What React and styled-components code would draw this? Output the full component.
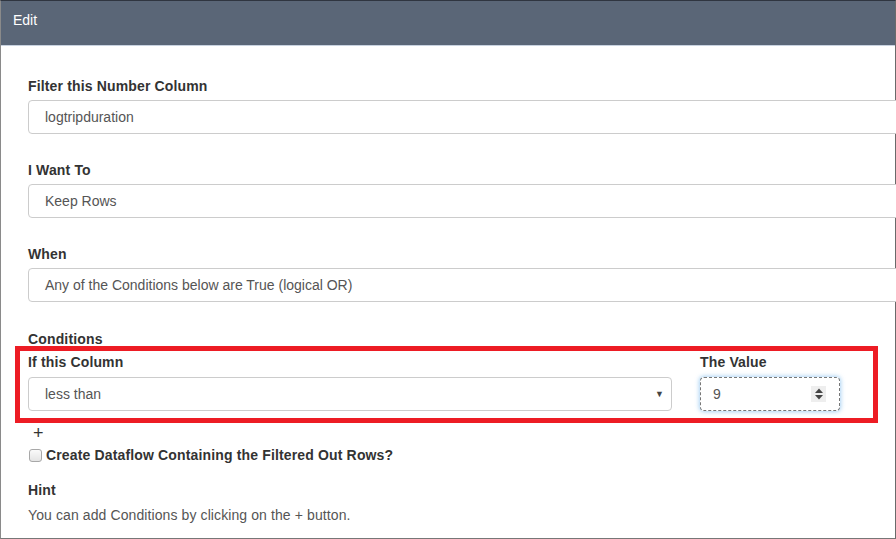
import styled, { createGlobalStyle } from 'styled-components';

const GlobalStyle = createGlobalStyle`
	html, body {
		margin: 0;
		padding: 0;
		overflow: hidden;
		background: #fff;
	}
	body {
		font-family: "Liberation Sans", Arial, sans-serif;
		color: #333;
	}
`;

function Field({ label, value }) {
	return (
		<Group>
			<Label>{ label }</Label>
			<TextBox>{ value }</TextBox>
		</Group>
	);
}

export default function App() {
	return (
		<>
			<GlobalStyle />
			<Frame>
				<Header>Edit</Header>
				<Body>
					<Field label="Filter this Number Column" value="logtripduration" />
					<Field label="I Want To" value="Keep Rows" />
					<Field label="When" value="Any of the Conditions below are True (logical OR)" />
					<SectionLabel>Conditions</SectionLabel>
					<Highlight>
						<ConditionRow>
							<div>
								<SubLabel>If this Column</SubLabel>
								<SelectBox>
									less than
									<Caret>▼</Caret>
								</SelectBox>
							</div>
							<div>
								<SubLabel>The Value</SubLabel>
								<NumberBox>
									9
									<Spinner>
										<svg width="10" height="14" viewBox="0 0 10 14">
											<path d="M1 6 L5 1.5 L9 6 Z" fill="#444" />
											<path d="M1 8 L5 12.5 L9 8 Z" fill="#444" />
										</svg>
									</Spinner>
								</NumberBox>
							</div>
						</ConditionRow>
					</Highlight>
					<Plus>+</Plus>
					<CheckRow>
						<CheckBox />
						Create Dataflow Containing the Filtered Out Rows?
					</CheckRow>
					<HintTitle>Hint</HintTitle>
					<HintText>You can add Conditions by clicking on the + button.</HintText>
				</Body>
			</Frame>
		</>
	);
}

const Frame = styled.div`
	width: 896px;
	height: 539px;
	box-sizing: border-box;
	border-top: 1px solid #2f3540;
	border-left: 1px solid #8a8a8a;
	border-right: 1px solid #6a6a6a;
	border-bottom: 1px solid #777;
	display: flex;
	flex-direction: column;
`;

const Header = styled.div`
	height: 44px;
	flex: none;
	background: #5a6677;
	border-bottom: 1px solid #c8d2e0;
	color: #fff;
	font-size: 14px;
	line-height: 38px;
	padding-left: 12px;
`;

const Body = styled.div`
	padding: 31px 0 0 27px;
	display: flex;
	flex-direction: column;
	align-items: flex-start;
`;

const Group = styled.div`
	margin-bottom: 27px;
`;

const Label = styled.div`
	font-size: 14px;
	font-weight: bold;
	letter-spacing: 0.15px;
	line-height: 18px;
	margin-bottom: 5px;
	color: #333;
`;

const SectionLabel = styled(Label)`
	margin: 1px 0 0;
`;

const SubLabel = styled(Label)`
	margin-bottom: 6px;
`;

const TextBox = styled.div`
	width: 880px;
	height: 34px;
	box-sizing: border-box;
	border: 1px solid #ccc;
	border-radius: 4px;
	padding-left: 16px;
	font-size: 14px;
	line-height: 32px;
	color: #555;
	background: #fff;
`;

const Highlight = styled.div`
	margin: -2px 0 0 -13px;
	width: 863px;
	height: 77px;
	box-sizing: border-box;
	border: 5px solid #ed1c24;
	padding: 2px 0 0 8px;
`;

const ConditionRow = styled.div`
	display: grid;
	grid-template-columns: 644px 140px;
	column-gap: 28px;
`;

const SelectBox = styled(TextBox)`
	width: 644px;
	position: relative;
`;

const Caret = styled.span`
	position: absolute;
	right: 7px;
	top: 0;
	font-size: 9px;
	color: #444;
`;

const NumberBox = styled(TextBox)`
	width: 140px;
	position: relative;
	border: 1px dashed #777;
	box-shadow: 0 0 4px 1px rgba(102, 175, 233, 0.55);
	padding-left: 12px;
	color: #555;
`;

const Spinner = styled.span`
	position: absolute;
	right: 13px;
	top: 8px;
	width: 15px;
	height: 16px;
	background: #eee;
	display: flex;
	align-items: center;
	justify-content: center;
`;

const Plus = styled.div`
	font-size: 18px;
	line-height: 20px;
	margin-left: 5px;
	color: #333;
`;

const CheckRow = styled.label`
	display: flex;
	align-items: center;
	gap: 4px;
	margin-top: 3px;
	font-size: 14px;
	font-weight: bold;
	letter-spacing: 0.15px;
	line-height: 18px;
	color: #333;
`;

const CheckBox = styled.span`
	width: 11px;
	height: 11px;
	margin-left: 1px;
	border: 1px solid #a8a8a8;
	border-radius: 3px;
	background: linear-gradient(#fafafa, #e4e4e4);
`;

const HintTitle = styled(Label)`
	margin: 17px 0 7px;
`;

const HintText = styled.div`
	font-size: 14px;
	letter-spacing: 0.1px;
	line-height: 18px;
	color: #555;
`;
